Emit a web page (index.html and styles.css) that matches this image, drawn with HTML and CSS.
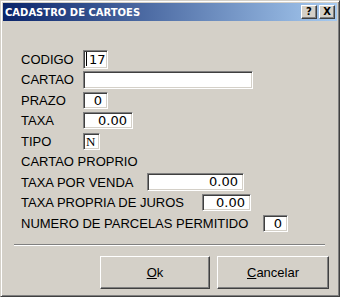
FILE: index.html
```html
<!DOCTYPE html>
<html lang="pt">
<head>
    <meta charset="UTF-8">
    <title>Cadastro de Cartoes</title>
    <link rel="stylesheet" href="styles.css">
</head>
<body>
    <div class="window">
        <div class="titlebar">
            <span class="title">CADASTRO DE CARTOES</span>
            <span class="tb-btn">?</span>
            <span class="tb-btn close">X</span>
        </div>

        <div class="client">
            <!-- campos do cadastro -->
            <div class="form">
                <div class="row">
                    <span class="label">CODIGO</span>
                    <div class="field w-code tall left"><span class="caret"></span>17</div>
                </div>
                <div class="row">
                    <span class="label">CARTAO</span>
                    <div class="field w-card mid"></div>
                </div>
                <div class="row">
                    <span class="label">PRAZO</span>
                    <div class="field w-code">0</div>
                </div>
                <div class="row">
                    <span class="label">TAXA</span>
                    <div class="field w-rate">0.00</div>
                </div>
                <div class="row">
                    <span class="label">TIPO</span>
                    <div class="field w-type left mono">N</div>
                </div>
                <div class="row">
                    <span class="label free">CARTAO PROPRIO</span>
                </div>
                <div class="row">
                    <span class="label l-venda">TAXA POR VENDA</span>
                    <div class="field w-venda mid">0.00</div>
                </div>
                <div class="row">
                    <span class="label l-juros">TAXA PROPRIA DE JUROS</span>
                    <div class="field w-juros">0.00</div>
                </div>
                <div class="row">
                    <span class="label l-parc">NUMERO DE PARCELAS PERMITIDO</span>
                    <div class="field w-code">0</div>
                </div>
            </div>

            <div class="separator"></div>

            <div class="actions">
                <button class="btn btn-ok"><u>O</u>k</button>
                <button class="btn btn-cancel"><u>C</u>ancelar</button>
            </div>
        </div>
    </div>
</body>
</html>
```

FILE: styles.css
```css
/* Janela no estilo classico do Windows */
body {
    margin: 0;
    font-family: "Liberation Sans", Arial, sans-serif;
    font-size: 13px;
    color: #000;
}
.window {
    box-sizing: border-box;
    width: 340px;
    height: 297px;
    padding: 2px;
    background-color: #d4d0c8;
    border: 1px solid;
    border-color: #d4d0c8 #404040 #404040 #d4d0c8;
    box-shadow: inset 1px 1px #fff, inset -1px -1px #808080;
    display: flex;
    flex-direction: column;
}
.titlebar {
    height: 18px;
    padding: 0 2px;
    background: linear-gradient(to right, #0a246a, #a6caf0);
    display: flex;
    align-items: center;
}
.title {
    flex: 1;
    color: #fff;
    font-family: "DejaVu Sans", sans-serif;
    font-weight: bold;
    font-size: 10px;
}
.tb-btn {
    box-sizing: border-box;
    width: 16px;
    height: 14px;
    background-color: #d4d0c8;
    border: 1px solid;
    border-color: #fff #404040 #404040 #fff;
    box-shadow: inset -1px -1px #808080;
    font-family: "DejaVu Sans", sans-serif;
    font-weight: bold;
    font-size: 10px;
    line-height: 12px;
    text-align: center;
}
.tb-btn.close {
    margin-left: 2px;
}
.client {
    flex: 1;
    padding: 28px 0 0 18px;
}
.row {
    height: 20.5px;
    display: flex;
    align-items: center;
}
.label {
    width: 62px;
    flex: none;
}
.label.free {
    width: auto;
}
.l-venda {
    width: 126px;
}
.l-juros {
    width: 181px;
}
.l-parc {
    width: 242px;
}
.field {
    box-sizing: border-box;
    height: 17px;
    padding: 0 5px;
    background-color: #fff;
    border: 1px solid;
    border-color: #808080 #fff #fff #808080;
    box-shadow: inset 1px 1px #404040, inset -1px -1px #d4d0c8;
    font-family: "DejaVu Sans", sans-serif;
    font-size: 13px;
    line-height: 15px;
    text-align: right;
    white-space: nowrap;
    overflow: hidden;
}
.field.left {
    text-align: left;
    padding: 0 2px;
}
.field.tall {
    height: 19px;
    line-height: 17px;
}
.field.mid {
    height: 18px;
    line-height: 16px;
}
.field.mono {
    font-family: "Liberation Serif", serif;
}
.caret {
    display: inline-block;
    width: 1px;
    height: 14px;
    margin-right: 2px;
    vertical-align: -2px;
    background-color: #000;
}
.w-code { width: 25px; }
.w-card { width: 170px; }
.w-rate { width: 50px; }
.w-type { width: 17px; }
.w-venda { width: 97px; }
.w-juros { width: 49px; }
.separator {
    margin: 10px 12px 0 -7px;
    border-top: 1px solid #808080;
    border-bottom: 1px solid #fff;
}
.actions {
    display: flex;
    justify-content: flex-end;
    gap: 7px;
    margin: 10px 8px 0 0;
}
.btn {
    box-sizing: border-box;
    height: 33px;
    background-color: #d4d0c8;
    border: 1px solid;
    border-color: #fff #404040 #404040 #fff;
    box-shadow: inset -1px -1px #808080;
    font-family: "Liberation Sans", Arial, sans-serif;
    font-size: 13px;
    color: #000;
    padding: 0;
}
.btn-ok { width: 110px; }
.btn-cancel { width: 112px; }
```
